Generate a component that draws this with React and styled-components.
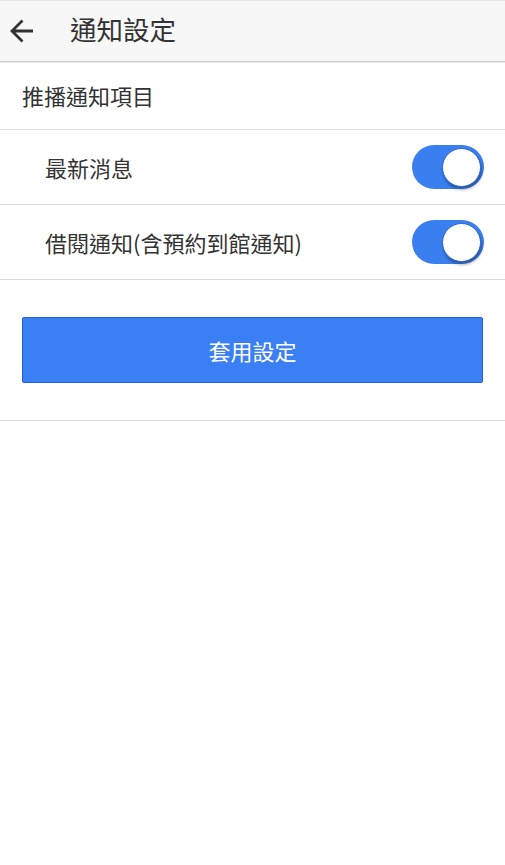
import React, { useState } from "react";
import styled, { createGlobalStyle } from "styled-components";

const Global = createGlobalStyle`
  html, body { margin: 0; padding: 0; background: #fff; }
  body { font-family: "Noto Sans CJK TC", "Noto Sans", sans-serif; color: #333; }
  * { box-sizing: border-box; }
`;

const Page = styled.div`
  width: 505px;
  min-height: 865px;
  background: #fff;
`;

const Header = styled.header`
  height: 62px;
  display: flex;
  align-items: center;
  background: #f7f7f7;
  border-top: 1px solid #e6e6e6;
  border-bottom: 1px solid #c9c9c9;
  box-shadow: 0 1px 1px rgba(0,0,0,0.08);
`;

const BackButton = styled.button`
  width: 44px;
  height: 44px;
  padding: 0 0 0 9px;
  border: none;
  background: none;
  display: flex;
  align-items: center;
  color: #333;
`;

const Title = styled.h1`
  margin: 0 0 3px 26px;
  font-size: 26.5px;
  font-weight: 400;
  color: #333;
  line-height: 1;
  font-family: "Noto Sans CJK TC", sans-serif;
`;

const Row = styled.div`
  height: ${p => (p.$section ? 68 : 75)}px;
  display: flex;
  align-items: center;
  justify-content: space-between;
  padding: 0 22px 0 ${p => (p.$section ? 22 : 45)}px;
  border-bottom: 1px solid #dcdcdc;
`;

const Label = styled.span`
  font-size: 22px;
  color: #333;
  font-family: "Noto Sans CJK TC", sans-serif;
  margin-bottom: 1px;
`;

const Track = styled.button`
  position: relative;
  width: 72px;
  height: 44px;
  border-radius: 22px;
  border: none;
  padding: 0;
  background: ${p => (p.$on ? "#3a7ff0" : "#ccc")};
  cursor: pointer;
  margin-right: -1px;
`;

const Knob = styled.span`
  position: absolute;
  top: 3px;
  left: ${p => (p.$on ? 30 : 3)}px;
  width: 39px;
  height: 39px;
  border-radius: 50%;
  background: #fff;
  border: 1px solid #2b65c8;
  box-shadow: 1px 3px 3px rgba(0,0,0,0.3);
`;

const Toggle = ({ on, onChange }) => (
  <Track $on={on} onClick={onChange} aria-pressed={on}>
    <Knob $on={on} />
  </Track>
);

const ButtonArea = styled.div`
  padding: 37px 22px 37px 22px;
  border-bottom: 1px solid #dcdcdc;
`;

const ApplyButton = styled.button`
  width: 100%;
  height: 66px;
  border-radius: 2px;
  border: 1px solid #1c5fe0;
  background: #3a80f4;
  color: #fff;
  font-size: 22px;
  font-family: "Noto Sans CJK TC", sans-serif;
  cursor: pointer;
`;

export default function App() {
  const [news, setNews] = useState(true);
  const [borrow, setBorrow] = useState(true);
  return (
    <Page>
      <Global />
      <Header>
        <BackButton aria-label="back">
          <svg width="26" height="26" viewBox="0 0 26 26">
            <path d="M24 13H3M13.5 2.5L3 13l10.5 10.5" fill="none" stroke="#333" strokeWidth="2.8" strokeLinecap="butt" strokeLinejoin="miter" />
          </svg>
        </BackButton>
        <Title>通知設定</Title>
      </Header>
      <Row $section>
        <Label>推播通知項目</Label>
      </Row>
      <Row>
        <Label>最新消息</Label>
        <Toggle on={news} onChange={() => setNews(!news)} />
      </Row>
      <Row>
        <Label>借閱通知(含預約到館通知)</Label>
        <Toggle on={borrow} onChange={() => setBorrow(!borrow)} />
      </Row>
      <ButtonArea>
        <ApplyButton>套用設定</ApplyButton>
      </ButtonArea>
    </Page>
  );
}
